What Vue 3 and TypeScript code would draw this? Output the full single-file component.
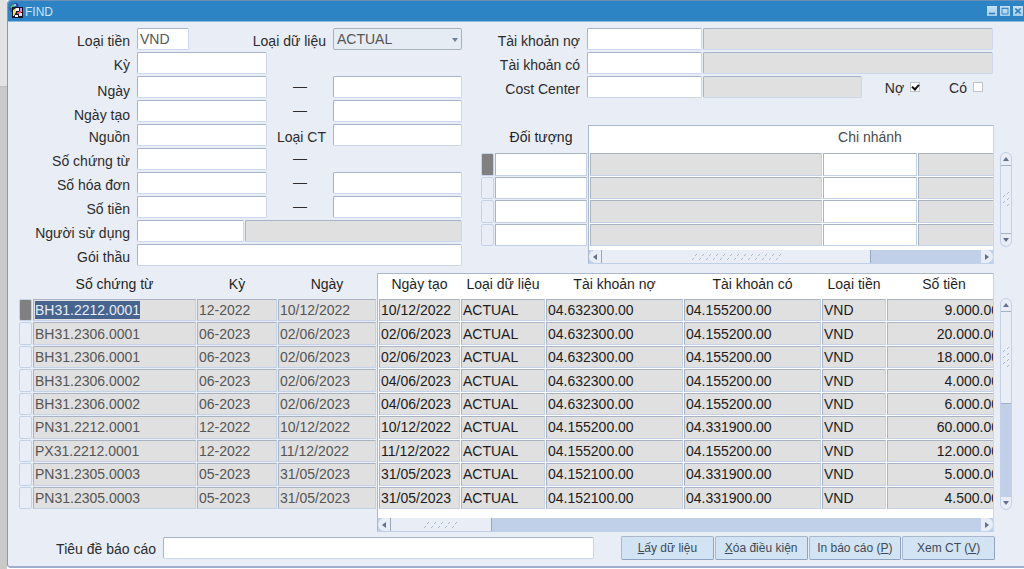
<script setup lang="ts">
import { ref } from 'vue'

interface FormRow {
  id: string
  label: string
  mid?: string
  second?: boolean
  low?: boolean
}

interface Entry {
  doc: string
  period: string
  date: string
  created: string
  debit: string
  credit: string
  amount: string
}

const formRows: FormRow[] = [
  { id: 'ky', label: 'Kỳ' },
  { id: 'ngay', label: 'Ngày', mid: '—', second: true, low: true },
  { id: 'ngay-tao', label: 'Ngày tạo', mid: '—', second: true, low: true },
  { id: 'nguon', label: 'Nguồn', mid: 'Loại CT', second: true },
  { id: 'so-chung-tu', label: 'Số chứng từ', mid: '—' },
  { id: 'so-hoa-don', label: 'Số hóa đơn', mid: '—', second: true },
  { id: 'so-tien', label: 'Số tiền', mid: '—', second: true },
]

const accountRows = [
  { id: 'tk-no', label: 'Tài khoản nợ' },
  { id: 'tk-co', label: 'Tài khoản có' },
]

const entries: Entry[] = [
  { doc: 'BH31.2212.0001', period: '12-2022', date: '10/12/2022', created: '10/12/2022', debit: '04.632300.00', credit: '04.155200.00', amount: '9.000.00' },
  { doc: 'BH31.2306.0001', period: '06-2023', date: '02/06/2023', created: '02/06/2023', debit: '04.632300.00', credit: '04.155200.00', amount: '20.000.00' },
  { doc: 'BH31.2306.0001', period: '06-2023', date: '02/06/2023', created: '02/06/2023', debit: '04.632300.00', credit: '04.155200.00', amount: '18.000.00' },
  { doc: 'BH31.2306.0002', period: '06-2023', date: '02/06/2023', created: '04/06/2023', debit: '04.632300.00', credit: '04.155200.00', amount: '4.000.00' },
  { doc: 'BH31.2306.0002', period: '06-2023', date: '02/06/2023', created: '04/06/2023', debit: '04.632300.00', credit: '04.155200.00', amount: '6.000.00' },
  { doc: 'PN31.2212.0001', period: '12-2022', date: '10/12/2022', created: '10/12/2022', debit: '04.155200.00', credit: '04.331900.00', amount: '60.000.00' },
  { doc: 'PX31.2212.0001', period: '12-2022', date: '11/12/2022', created: '11/12/2022', debit: '04.155200.00', credit: '04.155200.00', amount: '12.000.00' },
  { doc: 'PN31.2305.0003', period: '05-2023', date: '31/05/2023', created: '31/05/2023', debit: '04.152100.00', credit: '04.331900.00', amount: '5.000.00' },
  { doc: 'PN31.2305.0003', period: '05-2023', date: '31/05/2023', created: '31/05/2023', debit: '04.152100.00', credit: '04.331900.00', amount: '4.500.00' },
]

const currency = ref('VND')
const dataType = ref('ACTUAL')
const debitChecked = ref(true)
const creditChecked = ref(false)
</script>

<template>
  <div class="desktop">
    <div class="edge"></div>
    <main class="window">
      <header class="titlebar">
        <svg class="app-icon" width="16" height="16" viewBox="0 0 16 16" aria-hidden="true">
          <circle cx="5" cy="5" r="4.5" fill="#3a49a8" />
          <path d="M1 4l3-3 2 1-1 3-2 1z" fill="#4fc06a" />
          <path d="M5 0h3l2 3H6z" fill="#3b3fa0" />
          <path d="M5 1h2v2H5z" fill="#8fd0f0" />
          <rect x="3" y="4" width="11" height="11" fill="#15152a" />
          <path d="M4 7l3-2v4l-2 4H4z" fill="#f3e34a" />
          <rect x="7" y="5" width="3" height="3" fill="#f2f2ff" />
          <rect x="11" y="5" width="2" height="4" fill="#d98ae0" />
          <rect x="8" y="9" width="2" height="2" fill="#e34b5c" />
          <rect x="10" y="10" width="3" height="3" fill="#f6d5e5" />
          <rect x="6" y="12" width="3" height="2" fill="#ffffff" />
          <path d="M10 8h2v2h-2z" fill="#e34b5c" />
        </svg>
        <h1>FIND</h1>
        <div class="win-buttons">
          <button type="button" aria-label="Minimize">
            <svg width="10" height="10" viewBox="0 0 10 10"><path d="M2 7.5h6" stroke="#2c7fc0" stroke-width="1.6" /></svg>
          </button>
          <button type="button" aria-label="Maximize">
            <svg width="10" height="10" viewBox="0 0 10 10"><path d="M2 2.5h6v5.5h-6z" fill="none" stroke="#3a88c4" /><path d="M1.5 2.2h7" stroke="#3a88c4" /></svg>
          </button>
          <button type="button" aria-label="Close">
            <svg width="10" height="10" viewBox="0 0 10 10"><path d="M2.3 2.5l5.4 5M7.7 2.5l-5.4 5" stroke="#2c7fc0" stroke-width="1.7" /></svg>
          </button>
        </div>
      </header>

      <div class="body">
        <div class="top">
          <section class="form">
            <div class="row">
              <label for="loai-tien">Loại tiền</label>
              <div class="pair">
                <input id="loai-tien" v-model="currency" class="field currency" type="text" />
                <label for="loai-du-lieu">Loại dữ liệu</label>
                <div class="select">
                  <select id="loai-du-lieu" v-model="dataType">
                    <option>ACTUAL</option>
                  </select>
                  <svg width="8" height="5" viewBox="0 0 8 5" aria-hidden="true"><path d="M1 0h6L4 4z" fill="#6d7f9b" /></svg>
                </div>
              </div>
            </div>
            <div v-for="r in formRows" :key="r.id" class="row" :class="{ low: r.low }">
              <label :for="r.id">{{ r.label }}</label>
              <div class="trio">
                <input :id="r.id" class="field" type="text" />
                <label v-if="r.id === 'nguon'" for="nguon-2">{{ r.mid }}</label>
                <span v-else class="dash">{{ r.mid }}</span>
                <input v-if="r.second" :id="r.id + '-2'" class="field" type="text" :aria-label="r.id === 'nguon' ? undefined : r.label" />
              </div>
            </div>
            <div class="row">
              <label for="nguoi">Người sử dụng</label>
              <div class="user">
                <input id="nguoi" class="field" type="text" />
                <input class="field locked" type="text" readonly aria-label="Người sử dụng" />
              </div>
            </div>
            <div class="row">
              <label for="goi-thau">Gói thầu</label>
              <input id="goi-thau" class="field" type="text" />
            </div>
          </section>

          <section class="side">
            <div v-for="a in accountRows" :key="a.id" class="row acct">
              <label :for="a.id">{{ a.label }}</label>
              <input :id="a.id" class="field" type="text" />
              <div class="info">
                <input class="field locked" type="text" readonly :aria-label="a.label" />
              </div>
            </div>
            <div class="row acct">
              <label for="cost">Cost Center</label>
              <input id="cost" class="field" type="text" />
              <div class="info">
                <input class="field locked" type="text" readonly aria-label="Cost Center" />
                <div class="checks">
                  <label>Nợ <input v-model="debitChecked" type="checkbox" /></label>
                  <label>Có <input v-model="creditChecked" type="checkbox" /></label>
                </div>
              </div>
            </div>

            <div class="block objects">
              <table class="grid frozen">
                <colgroup><col class="c-mark" /><col /></colgroup>
                <thead><tr><th></th><th>Đối tượng</th></tr></thead>
                <tbody>
                  <tr v-for="n in 4" :key="n">
                    <td class="mark" :class="{ on: n === 1 }"></td>
                    <td class="edit"><input type="text" aria-label="Đối tượng" /></td>
                  </tr>
                </tbody>
              </table>
              <div class="canvas">
                <table class="grid">
                  <colgroup><col /><col class="c-branch" /><col class="c-branch" /></colgroup>
                  <thead><tr><th></th><th class="soft">Chi nhánh</th><th></th></tr></thead>
                  <tbody>
                    <tr v-for="n in 4" :key="n">
                      <td></td>
                      <td class="edit"><input type="text" aria-label="Chi nhánh" /></td>
                      <td></td>
                    </tr>
                  </tbody>
                </table>
                <div class="hbar">
                  <button type="button" aria-label="Left"><svg width="6" height="8" viewBox="0 0 6 8"><path d="M5 1v6L1 4z" fill="#62708c" /></svg></button>
                  <div class="thumb wide">
                    <svg width="90" height="8" viewBox="0 0 90 8">
                      <g v-for="n in 13" :key="n" stroke="#a9b8cf">
                        <path :d="`M${n * 7 - 3} 3l2-2M${n * 7 - 6} 7l2-2`" />
                      </g>
                    </svg>
                  </div>
                  <div class="track"></div>
                  <button type="button" aria-label="Right"><svg width="6" height="8" viewBox="0 0 6 8"><path d="M1 1v6l4-3z" fill="#62708c" /></svg></button>
                </div>
              </div>
              <div class="vbar">
                <button type="button" aria-label="Up"><svg width="8" height="6" viewBox="0 0 8 6"><path d="M1 5h6L4 1z" fill="#62708c" /></svg></button>
                <div class="thumb">
                  <svg width="8" height="18" viewBox="0 0 8 18"><path d="M5 3l2-2M5 9l2-2M5 15l2-2M1 6l2-2M1 12l2-2" stroke="#a9b8cf" /></svg>
                </div>
                <button type="button" aria-label="Down"><svg width="8" height="6" viewBox="0 0 8 6"><path d="M1 1h6L4 5z" fill="#62708c" /></svg></button>
              </div>
            </div>
          </section>
        </div>

        <section class="block entries">
          <table class="grid frozen">
            <colgroup><col class="c-mark" /><col /><col class="c-period" /><col class="c-date" /></colgroup>
            <thead><tr><th></th><th>Số chứng từ</th><th>Kỳ</th><th>Ngày</th></tr></thead>
            <tbody>
              <tr v-for="(e, i) in entries" :key="i">
                <td class="mark" :class="{ on: i === 0 }"></td>
                <td><span :class="{ selected: i === 0 }">{{ e.doc }}</span></td>
                <td>{{ e.period }}</td>
                <td>{{ e.date }}</td>
              </tr>
            </tbody>
          </table>
          <div class="canvas">
            <table class="grid">
              <colgroup><col class="c-created" /><col class="c-type" /><col class="c-account" /><col class="c-account" /><col class="c-currency" /><col /></colgroup>
              <thead>
                <tr><th>Ngày tạo</th><th>Loại dữ liệu</th><th>Tài khoản nợ</th><th>Tài khoản có</th><th>Loại tiền</th><th>Số tiền</th></tr>
              </thead>
              <tbody>
                <tr v-for="(e, i) in entries" :key="i">
                  <td>{{ e.created }}</td>
                  <td>ACTUAL</td>
                  <td>{{ e.debit }}</td>
                  <td>{{ e.credit }}</td>
                  <td>VND</td>
                  <td class="num">{{ e.amount }}</td>
                </tr>
              </tbody>
            </table>
            <div class="hbar">
              <button type="button" aria-label="Left"><svg width="6" height="8" viewBox="0 0 6 8"><path d="M5 1v6L1 4z" fill="#62708c" /></svg></button>
              <div class="thumb short">
                <svg width="36" height="8" viewBox="0 0 36 8">
                  <g v-for="n in 5" :key="n" stroke="#a9b8cf">
                    <path :d="`M${n * 7 - 3} 3l2-2M${n * 7 - 6} 7l2-2`" />
                  </g>
                </svg>
              </div>
              <div class="track"></div>
              <button type="button" aria-label="Right"><svg width="6" height="8" viewBox="0 0 6 8"><path d="M1 1v6l4-3z" fill="#62708c" /></svg></button>
            </div>
          </div>
          <div class="vbar">
            <button type="button" aria-label="Up"><svg width="8" height="6" viewBox="0 0 8 6"><path d="M1 5h6L4 1z" fill="#62708c" /></svg></button>
            <div class="thumb">
              <svg width="8" height="24" viewBox="0 0 8 24"><path d="M5 3l2-2M5 9l2-2M5 15l2-2M5 21l2-2M1 6l2-2M1 12l2-2M1 18l2-2" stroke="#a9b8cf" /></svg>
            </div>
            <div class="track"></div>
            <button type="button" aria-label="Down"><svg width="8" height="6" viewBox="0 0 8 6"><path d="M1 1h6L4 5z" fill="#62708c" /></svg></button>
          </div>
        </section>

        <footer class="footer">
          <label for="tieu-de">Tiêu đề báo cáo</label>
          <input id="tieu-de" class="field" type="text" />
          <div class="actions">
            <button type="button"><u>L</u>ấy dữ liệu</button>
            <button type="button"><u>X</u>óa điều kiện</button>
            <button type="button">In báo cáo (<u>P</u>)</button>
            <button type="button">Xem CT (<u>V</u>)</button>
          </div>
        </footer>
      </div>
    </main>
  </div>
</template>

<style>
body {
  margin: 0;
  background: #fff;
}
</style>

<style scoped>
.desktop,
.desktop * {
  box-sizing: border-box;
}
.desktop {
  display: flex;
  align-items: stretch;
  min-height: 100vh;
  font-family: 'Liberation Sans', Arial, sans-serif;
  font-size: 14px;
  line-height: 18px;
  color: #2b2b2b;
}
input,
select,
button {
  font: inherit;
  color: inherit;
  margin: 0;
}
svg {
  display: block;
}
.edge {
  flex: 0 0 7px;
  background: linear-gradient(#e2e2e2 86px, #bdbdbd 86px, #c9c9c9 88px);
}
.window {
  flex: 1;
  min-width: 0;
  align-self: flex-start;
  background: #e9eef6;
  border-top: 1px solid #6d8fb3;
  border-left: 1px solid #7f9aba;
  border-bottom: 2px solid #9db0cb;
  border-radius: 4px 0 0 4px;
}
.titlebar {
  display: flex;
  align-items: center;
  height: 21px;
  padding: 0 1px;
  background: #2c84c4;
  border-bottom: 1px solid #8dbbe0;
  border-radius: 3px 0 0 0;
}
h1 {
  flex: 1;
  margin: 0;
  font-size: 12px;
  font-weight: normal;
  line-height: 18px;
  padding-top: 2px;
  color: #cfe3f4;
}
.win-buttons {
  display: flex;
  gap: 3px;
}
.win-buttons button {
  width: 10px;
  height: 10px;
  padding: 0;
  border: 0;
  background: linear-gradient(#c9e2f5, #a4cdec);
}
.body {
  padding: 6px 12px 6px 10px;
}
.top {
  display: grid;
  grid-template-columns: minmax(0, 444fr) minmax(0, 532fr);
  gap: 18px;
}
.row {
  display: grid;
  grid-template-columns: 112px minmax(0, 1fr);
  column-gap: 7px;
  height: 24px;
  align-items: start;
}
.row label {
  text-align: right;
  white-space: nowrap;
  padding-top: 4px;
}
.row.low > label {
  align-self: end;
}
.field {
  display: block;
  width: 100%;
  min-width: 0;
  height: 22px;
  padding: 0 2px;
  background: #fff;
  border: 1px solid;
  border-color: #a9b5c6 #c9d8ec #c9d8ec #a9b5c6;
  border-radius: 2px;
  outline: 0;
}
.field.locked {
  background: #e0e0e0;
}
.pair {
  display: grid;
  grid-template-columns: 52fr 144fr 129fr;
}
.trio {
  display: grid;
  grid-template-columns: 130fr 66fr 129fr;
}
.currency,
select {
  color: #555;
}
.pair > label,
.trio > label {
  padding-right: 7px;
}
.dash {
  text-align: center;
  line-height: 20px;
}
.select {
  position: relative;
}
.select svg {
  position: absolute;
  right: 3px;
  top: 10px;
  pointer-events: none;
}
select {
  display: block;
  appearance: none;
  width: 100%;
  height: 22px;
  padding: 0 3px;
  background: #e6ecf3;
  border: 1px solid #a9b1bd;
  border-radius: 2px;
}
.user {
  display: grid;
  grid-template-columns: 107fr 217fr;
  gap: 1px;
}
.row.acct {
  grid-template-columns: 100px minmax(0, 115fr) minmax(0, 310fr);
  column-gap: 0;
}
.acct > label {
  padding-right: 0;
}
.acct > .field {
  width: auto;
  margin-left: 7px;
}
.row.acct {
  grid-template-columns: 100px minmax(0, 122fr) minmax(0, 310fr);
}
.info {
  display: flex;
  padding-left: 1px;
  padding-right: 19px;
}
.info .field {
  flex: 1;
}
.checks {
  display: flex;
  gap: 29px;
  padding: 0 10px 0 23px;
}
.checks label {
  display: flex;
  align-items: center;
  gap: 6px;
  padding-top: 2px;
}
.checks input {
  appearance: none;
  display: grid;
  width: 10px;
  height: 10px;
  margin-bottom: 2px;
  background: #fff;
  border: 1px solid #bfc3ca;
}
.checks input:checked::after {
  content: '';
  width: 3px;
  height: 5px;
  margin-left: 2px;
  border: solid #111;
  border-width: 0 2px 2px 0;
  transform: rotate(42deg);
}
.block {
  display: flex;
}
.objects {
  margin-top: 25px;
}
.entries {
  margin-top: 5px;
}
.grid {
  table-layout: fixed;
  border-collapse: separate;
  border-spacing: 1px;
}
.objects .grid {
  height: 121px;
}
.entries .grid {
  height: 236px;
}
.frozen {
  margin-top: 1px;
}
.objects .frozen {
  flex: 0 0 108px;
  width: 108px;
}
.entries .frozen {
  flex: 0 0 359px;
  width: 359px;
}
.objects .canvas .grid {
  width: 424px;
}
.entries .canvas .grid {
  width: 624px;
}
.c-mark {
  width: 13px;
}
.c-branch {
  width: 94px;
}
.c-period {
  width: 80px;
}
.c-date {
  width: 98px;
}
.c-created {
  width: 81px;
}
.c-type {
  width: 84px;
}
.c-account {
  width: 137px;
}
.c-currency {
  width: 64px;
}
th {
  padding: 0;
  font-weight: normal;
  text-align: center;
  white-space: nowrap;
  color: #1f1f1f;
}
th.soft {
  color: #4a4a4a;
}
.objects th {
  height: 25px;
  line-height: 20px;
  vertical-align: top;
}
.entries th {
  height: 23px;
  line-height: 18px;
  vertical-align: top;
}
td {
  padding: 0 1px;
  background: #e0e0e0;
  border: 1px solid;
  border-color: #a9b3c2 #c3d2e8 #c3d2e8 #a9b3c2;
  white-space: nowrap;
  overflow: hidden;
}
.frozen td {
  color: #555;
}
.canvas td {
  color: #1c1c1c;
}
td.edit {
  background: #fff;
}
td.edit input {
  display: block;
  width: 100%;
  height: 18px;
  padding: 0;
  border: 0;
  background: transparent;
  outline: 0;
}
td.mark {
  padding: 0;
  background: #e9eef6;
  border-color: #c3d2e8;
  border-radius: 2px;
}
td.mark.on {
  background: #808080;
}
td.num {
  text-align: right;
}
.selected {
  display: inline-block;
  background: #46648f;
  color: #e8eef6;
}
.canvas {
  flex: 1;
  min-width: 0;
  overflow: hidden;
  background: #fff;
  border: 1px solid;
  border-color: #a9b8cc #c9d8ec #c0d0e8 #a9b8cc;
}
.hbar {
  display: flex;
  height: 13px;
  background: #c0d0e8;
}
.objects .hbar {
  margin-top: 3px;
}
.entries .hbar {
  margin-top: 8px;
}
.hbar button,
.vbar button {
  display: flex;
  align-items: center;
  justify-content: center;
  flex: 0 0 12px;
  padding: 0;
  border: 0;
  background: #e9eef6;
}
.hbar button:first-child {
  border-radius: 7px 0 0 7px;
}
.hbar button:last-child {
  border-radius: 0 7px 7px 0;
}
.thumb {
  display: flex;
  align-items: center;
  justify-content: center;
  background: #e9eef6;
}
.hbar .thumb {
  border: solid #98a6bc;
  border-width: 0 1px;
}
.thumb.wide {
  flex: 269 1 0;
}
.wide + .track {
  flex: 110 1 0;
}
.thumb.short {
  flex: 100 1 0;
}
.short + .track {
  flex: 491 1 0;
}
.vbar {
  display: flex;
  flex-direction: column;
  flex: 0 0 12px;
  margin-left: 6px;
  border: 1px solid #c3d2e8;
  border-radius: 6px;
  background: #c0d0e8;
  overflow: hidden;
}
.objects .vbar {
  margin-top: 27px;
  margin-bottom: 17px;
}
.entries .vbar {
  margin-top: 25px;
  margin-bottom: 22px;
}
.vbar .thumb {
  flex: 92 1 0;
  border: solid #a3b1c8;
  border-width: 1px 0;
}
.vbar .track {
  flex: 94 1 0;
}
.footer {
  display: flex;
  align-items: center;
  margin-top: 4px;
  height: 24px;
}
.footer > label {
  flex: 0 0 138px;
  text-align: right;
  padding-top: 2px;
}
.footer .field {
  flex: 431 1 431px;
  margin-left: 7px;
}
.actions {
  display: grid;
  grid-template-columns: repeat(4, minmax(0, 1fr));
  gap: 1px;
  flex: 374 1 374px;
  margin-left: 27px;
  margin-right: 17px;
}
.actions button {
  height: 24px;
  padding: 0;
  font-size: 12px;
  color: #3f4a58;
  background: #d2e3f3;
  border: 1px solid;
  border-color: #a9b8cc #8ea3c0 #8ea3c0 #a9b8cc;
  border-radius: 2px;
  white-space: nowrap;
}
</style>
